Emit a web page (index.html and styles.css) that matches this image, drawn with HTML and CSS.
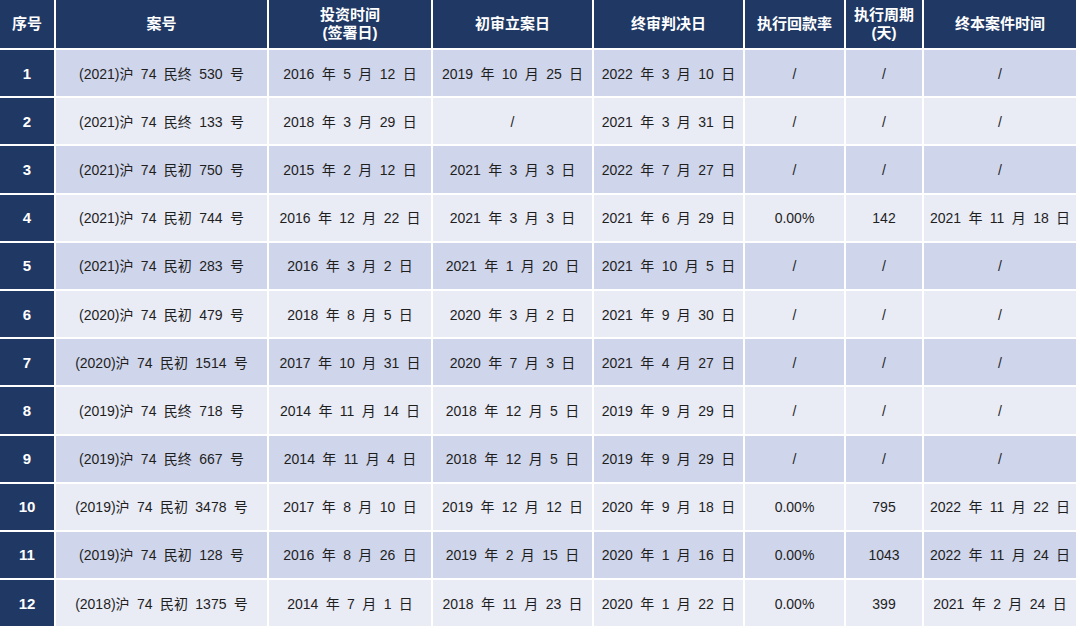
FILE: index.html
```html
<!DOCTYPE html>
<html lang="zh">
<head>
<meta charset="utf-8">
<link rel="stylesheet" href="styles.css">
</head>
<body>
<div class="table">
  <div class="row head">
    <div class="cell">序号</div>
    <div class="cell">案号</div>
    <div class="cell">投资时间<br>(签署日)</div>
    <div class="cell">初审立案日</div>
    <div class="cell">终审判决日</div>
    <div class="cell">执行回款率</div>
    <div class="cell">执行周期<br>(天)</div>
    <div class="cell">终本案件时间</div>
  </div>
  <div class="row odd">
    <div class="cell idx">1</div><div class="cell">(2021)沪 74 民终 530 号</div><div class="cell">2016 年 5 月 12 日</div><div class="cell">2019 年 10 月 25 日</div><div class="cell">2022 年 3 月 10 日</div><div class="cell">/</div><div class="cell">/</div><div class="cell">/</div>
  </div>
  <div class="row even">
    <div class="cell idx">2</div><div class="cell">(2021)沪 74 民终 133 号</div><div class="cell">2018 年 3 月 29 日</div><div class="cell">/</div><div class="cell">2021 年 3 月 31 日</div><div class="cell">/</div><div class="cell">/</div><div class="cell">/</div>
  </div>
  <div class="row odd">
    <div class="cell idx">3</div><div class="cell">(2021)沪 74 民初 750 号</div><div class="cell">2015 年 2 月 12 日</div><div class="cell">2021 年 3 月 3 日</div><div class="cell">2022 年 7 月 27 日</div><div class="cell">/</div><div class="cell">/</div><div class="cell">/</div>
  </div>
  <div class="row even">
    <div class="cell idx">4</div><div class="cell">(2021)沪 74 民初 744 号</div><div class="cell">2016 年 12 月 22 日</div><div class="cell">2021 年 3 月 3 日</div><div class="cell">2021 年 6 月 29 日</div><div class="cell">0.00%</div><div class="cell">142</div><div class="cell">2021 年 11 月 18 日</div>
  </div>
  <div class="row odd">
    <div class="cell idx">5</div><div class="cell">(2021)沪 74 民初 283 号</div><div class="cell">2016 年 3 月 2 日</div><div class="cell">2021 年 1 月 20 日</div><div class="cell">2021 年 10 月 5 日</div><div class="cell">/</div><div class="cell">/</div><div class="cell">/</div>
  </div>
  <div class="row even">
    <div class="cell idx">6</div><div class="cell">(2020)沪 74 民初 479 号</div><div class="cell">2018 年 8 月 5 日</div><div class="cell">2020 年 3 月 2 日</div><div class="cell">2021 年 9 月 30 日</div><div class="cell">/</div><div class="cell">/</div><div class="cell">/</div>
  </div>
  <div class="row odd">
    <div class="cell idx">7</div><div class="cell">(2020)沪 74 民初 1514 号</div><div class="cell">2017 年 10 月 31 日</div><div class="cell">2020 年 7 月 3 日</div><div class="cell">2021 年 4 月 27 日</div><div class="cell">/</div><div class="cell">/</div><div class="cell">/</div>
  </div>
  <div class="row even">
    <div class="cell idx">8</div><div class="cell">(2019)沪 74 民终 718 号</div><div class="cell">2014 年 11 月 14 日</div><div class="cell">2018 年 12 月 5 日</div><div class="cell">2019 年 9 月 29 日</div><div class="cell">/</div><div class="cell">/</div><div class="cell">/</div>
  </div>
  <div class="row odd">
    <div class="cell idx">9</div><div class="cell">(2019)沪 74 民终 667 号</div><div class="cell">2014 年 11 月 4 日</div><div class="cell">2018 年 12 月 5 日</div><div class="cell">2019 年 9 月 29 日</div><div class="cell">/</div><div class="cell">/</div><div class="cell">/</div>
  </div>
  <div class="row even">
    <div class="cell idx">10</div><div class="cell">(2019)沪 74 民初 3478 号</div><div class="cell">2017 年 8 月 10 日</div><div class="cell">2019 年 12 月 12 日</div><div class="cell">2020 年 9 月 18 日</div><div class="cell">0.00%</div><div class="cell">795</div><div class="cell">2022 年 11 月 22 日</div>
  </div>
  <div class="row odd">
    <div class="cell idx">11</div><div class="cell">(2019)沪 74 民初 128 号</div><div class="cell">2016 年 8 月 26 日</div><div class="cell">2019 年 2 月 15 日</div><div class="cell">2020 年 1 月 16 日</div><div class="cell">0.00%</div><div class="cell">1043</div><div class="cell">2022 年 11 月 24 日</div>
  </div>
  <div class="row even">
    <div class="cell idx">12</div><div class="cell">(2018)沪 74 民初 1375 号</div><div class="cell">2014 年 7 月 1 日</div><div class="cell">2018 年 11 月 23 日</div><div class="cell">2020 年 1 月 22 日</div><div class="cell">0.00%</div><div class="cell">399</div><div class="cell">2021 年 2 月 24 日</div>
  </div>
</div>
</body>
</html>
```

FILE: styles.css
```css
html, body {
  margin: 0;
  padding: 0;
  background: #ffffff;
}
body {
  font-family: "Liberation Sans", "Noto Sans CJK SC", sans-serif;
  color: #1e1e1e;
}
.table {
  display: grid;
  grid-template-columns: 54px 211px 162px 159px 149px 99px 76px 152px;
  grid-template-rows: 48px repeat(12, 46.2px);
  column-gap: 2px;
  row-gap: 2px;
  width: 1076px;
}
.row {
  display: contents;
}
.cell {
  display: flex;
  align-items: center;
  justify-content: center;
  text-align: center;
  font-size: 14px;
  line-height: 18px;
  padding-top: 1px;
  white-space: pre;
  word-spacing: 3.5px;
}
.head .cell {
  background: #203864;
  color: #ffffff;
  font-weight: bold;
  font-size: 15px;
  line-height: 18px;
  padding-top: 0;
  word-spacing: 0;
}
.odd .cell {
  background: #cfd5ea;
}
.even .cell {
  background: #e9ebf5;
}
.row .cell.idx {
  background: #203864;
  color: #ffffff;
  font-weight: bold;
  font-size: 15px;
}
```
